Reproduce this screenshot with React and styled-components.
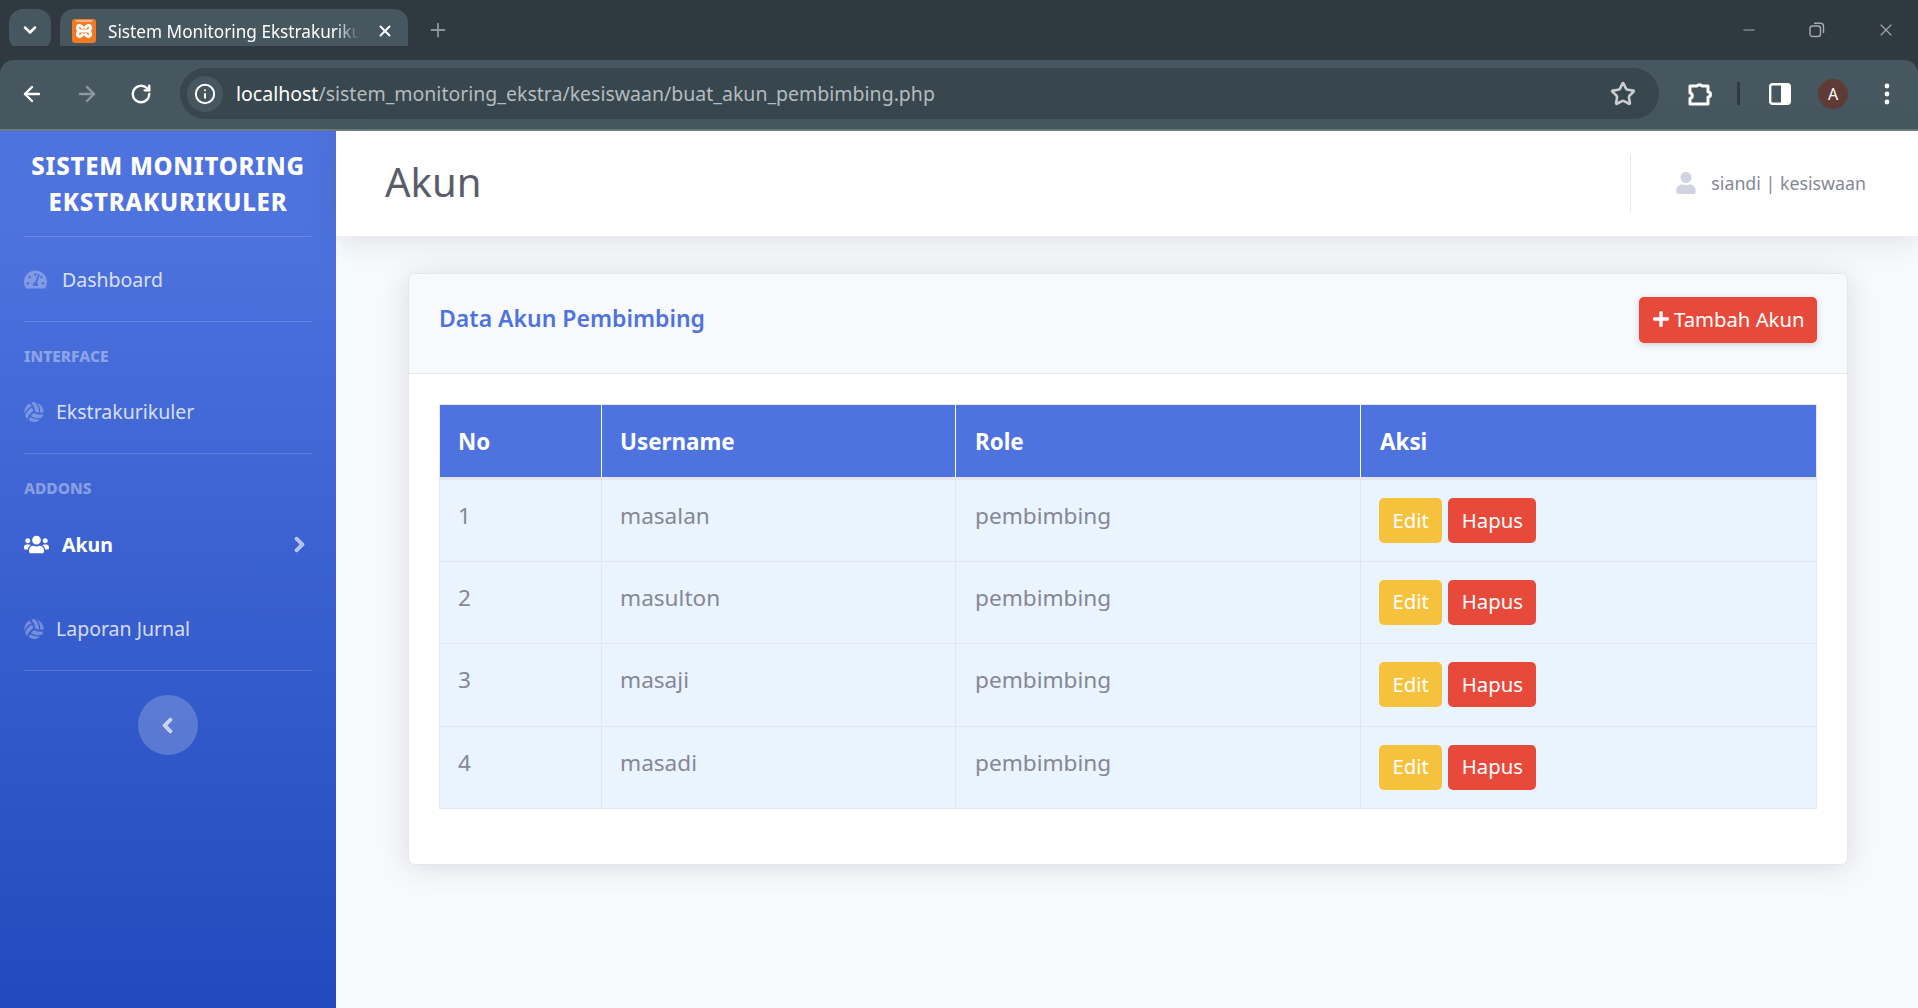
import React from 'react';
import styled, { createGlobalStyle } from 'styled-components';
import { ArrowLeft, ArrowRight, ChevronDown, Info, Minus, Plus, RotateCw, Star, X } from 'lucide-react';
import { FaChevronLeft, FaChevronRight, FaPlus, FaTachometerAlt, FaUser, FaUsers, FaVolleyballBall } from 'react-icons/fa';

const FONT = '"Noto Sans", "Open Sans", sans-serif';

const GlobalStyle = createGlobalStyle`
  html, body {
    margin: 0;
    padding: 0;
    height: 100%;
    overflow: hidden;
    background: #f8f9fc;
    font-family: ${FONT};
  }
  * { box-sizing: border-box; }
`;

const Window = styled.div`
  width: 1918px;
  height: 1008px;
  display: flex;
  flex-direction: column;
  overflow: hidden;
`;

/* browser chrome */
const TabStrip = styled.div`
  height: 60px;
  flex: none;
  display: flex;
  align-items: flex-end;
  background: #2f3a40;
  padding-left: 9px;
`;

const TabSearch = styled.div`
  width: 42px;
  height: 42px;
  margin-bottom: 9px;
  border-radius: 14px;
  background: #46575f;
  color: #fff;
  display: flex;
  align-items: center;
  justify-content: center;
`;

const Tab = styled.div`
  width: 348px;
  height: 51px;
  margin-left: 9px;
  padding: 0 14px 7px 12px;
  border-radius: 14px 14px 0 0;
  background: #46575f;
  display: flex;
  align-items: center;
  color: #fff;
`;

const TabTitle = styled.span`
  width: 252px;
  margin-left: 12px;
  font: 400 17.200px "Noto Sans", sans-serif;
  white-space: nowrap;
  overflow: hidden;
  -webkit-mask-image: linear-gradient(to right, #000 90%, transparent);
  mask-image: linear-gradient(to right, #000 90%, transparent);
`;

const TabClose = styled.span`
  margin-left: auto;
  display: flex;
`;

const NewTab = styled.div`
  margin: 0 0 5px 19px;
  height: 50px;
  display: flex;
  align-items: center;
  color: #8b9599;
`;

const WindowControls = styled.div`
  margin-left: auto;
  height: 60px;
  width: 206px;
  padding: 0 22px 0 28px;
  display: flex;
  align-items: center;
  justify-content: space-between;
  color: #a5acb0;
`;

const RestoreIcon = () => (
  <svg width="16" height="16" viewBox="0 0 16 16" fill="none" stroke="currentColor" strokeWidth="1.4">
    <rect x="1" y="4" width="10.5" height="10.5" rx="2.5" />
    <path d="M5 1.2h6.5a3 3 0 0 1 3 3V11" />
  </svg>
);

const Toolbar = styled.div`
  height: 71px;
  flex: none;
  display: flex;
  align-items: center;
  padding: 0 0 2px 20px;
  background: #46575f;
  border-bottom: 2px solid #6d7c84;
  border-radius: 14px 14px 0 0;
  box-shadow: 0 -14px 0 0 #2f3a40;
  color: #fff;
`;

const NavButton = styled.span`
  width: 55px;
  display: flex;
  color: ${(p) => (p.$off ? '#8d999f' : '#fff')};
`;

const Omnibox = styled.div`
  width: 1479px;
  height: 51px;
  margin-left: -5px;
  padding: 0 23px 0 7px;
  border-radius: 26px;
  background: #38464d;
  display: flex;
  align-items: center;
`;

const SiteInfo = styled.span`
  width: 36px;
  height: 36px;
  border-radius: 50%;
  background: #46575f;
  display: flex;
  align-items: center;
  justify-content: center;
  color: #fff;
`;

const Url = styled.span`
  margin-left: 13px;
  font: 400 19.500px "Noto Sans", sans-serif;
  color: #b3bcc0;
  b {
    font-weight: 400;
    color: #fff;
  }
`;

const BookmarkStar = styled.span`
  margin-left: auto;
  display: flex;
  color: #c9cdd0;
`;

const ToolbarEnd = styled.div`
  flex: 1;
  display: flex;
  align-items: center;
  padding: 0 28px;
`;

const ToolDivider = styled.span`
  width: 3px;
  height: 23px;
  margin: 0 29px 0 24px;
  background: #2f3a40;
`;

const Avatar = styled.span`
  width: 30px;
  height: 30px;
  margin-left: 27px;
  border-radius: 50%;
  background: #5e3b34;
  color: #fff;
  font: 400 16px "Noto Sans", sans-serif;
  display: flex;
  align-items: center;
  justify-content: center;
`;

const Kebab = styled.span`
  margin-left: auto;
  display: flex;
`;

const ExtensionIcon = () => (
  <svg width="26" height="26" viewBox="0 0 26 26" fill="none" stroke="#fff" strokeWidth="3" strokeLinejoin="round">
    <path d="M3 5h7a3 3 0 0 1 5 0h6v6a2.500 2.500 0 0 1 0 5v7H3v-5.500c3-.5 3-5 0-5.500z" />
  </svg>
);

const PanelIcon = () => (
  <svg width="22" height="22" viewBox="0 0 22 22">
    <rect x="1.200" y="1.200" width="19.600" height="19.600" rx="2.500" fill="none" stroke="#fff" strokeWidth="2.400" />
    <rect x="12" y="1.200" width="8.800" height="19.600" fill="#fff" />
  </svg>
);

const KebabIcon = () => (
  <svg width="6" height="22" viewBox="0 0 6 22" fill="#fff">
    <circle cx="3" cy="3" r="2.400" />
    <circle cx="3" cy="11" r="2.400" />
    <circle cx="3" cy="19" r="2.400" />
  </svg>
);

const XamppIcon = () => (
  <svg width="24" height="24" viewBox="0 0 24 24">
    <rect width="24" height="24" rx="3" fill="#f37a22" />
    <path d="M4 2h16" stroke="#fbd3b0" strokeWidth="1.300" />
    <path
      d="M10.500 8.500C9 5.800 5.500 6 5.500 9c0 2 1.500 2.700 3 3-1.500.3-3 1-3 3 0 3 3.500 3.200 5 .5M13.500 8.500c1.500-2.700 5-2.500 5 .5 0 2-1.500 2.700-3 3 1.500.3 3 1 3 3 0 3-3.500 3.200-5 .5M9 12h6"
      fill="none"
      stroke="#fff"
      strokeWidth="3"
      strokeLinecap="round"
    />
  </svg>
);

/* page */
const Page = styled.div`
  flex: 1;
  min-height: 0;
  display: flex;
`;

const Sidebar = styled.aside`
  width: 336px;
  flex: none;
  padding: 0 24px;
  background: linear-gradient(180deg, #4e73df 10%, #224abe 100%);
  display: flex;
  flex-direction: column;
`;

const Brand = styled.div`
  height: 106px;
  padding-top: 17px;
  flex: none;
  border-bottom: 1px solid rgba(255, 255, 255, 0.15);
  color: #fff;
  font-size: 24px;
  font-weight: 800;
  line-height: 36px;
  letter-spacing: 0.750px;
  text-align: center;
  white-space: nowrap;
`;

const NavItem = styled.div`
  height: ${(p) => p.$height}px;
  padding-top: ${(p) => p.$drop || 0}px;
  flex: none;
  display: flex;
  align-items: center;
  gap: ${(p) => p.$gap}px;
  font-size: 19.500px;
  font-weight: ${(p) => (p.$active ? 700 : 400)};
  color: ${(p) => (p.$active ? '#fff' : 'rgba(255, 255, 255, 0.8)')};
  border-bottom: ${(p) => (p.$rule ? '1px solid rgba(255, 255, 255, 0.15)' : 'none')};
  svg {
    flex: none;
    color: ${(p) => (p.$active ? '#fff' : 'rgba(255, 255, 255, 0.3)')};
  }
`;

const NavArrow = styled.span`
  margin-left: auto;
  margin-right: 4px;
  display: flex;
  svg {
    color: rgba(255, 255, 255, 0.55);
    stroke: currentColor;
    stroke-width: 36;
  }
`;

const SectionLabel = styled.div`
  height: ${(p) => p.$height}px;
  flex: none;
  display: flex;
  align-items: flex-end;
  font-size: 15.500px;
  font-weight: 800;
  line-height: 24px;
  color: rgba(255, 255, 255, 0.4);
`;

const SidebarToggle = styled.div`
  width: 60px;
  height: 60px;
  margin: 24px auto 0;
  flex: none;
  border-radius: 50%;
  background: rgba(255, 255, 255, 0.2);
  color: rgba(255, 255, 255, 0.6);
  display: flex;
  align-items: center;
  justify-content: center;
  svg {
    margin-left: -2px;
    stroke: currentColor;
    stroke-width: 36;
  }
`;

const Main = styled.main`
  flex: 1;
  min-width: 0;
  display: flex;
  flex-direction: column;
`;

const Topbar = styled.header`
  height: 105px;
  flex: none;
  padding: 0 52px 0 49px;
  background: #fff;
  box-shadow: 0 2px 28px rgba(58, 59, 69, 0.15);
  display: flex;
  align-items: center;
  position: relative;
`;

const PageTitle = styled.h1`
  margin: 0 0 4px;
  font-size: 40px;
  font-weight: 400;
  color: #5a5c69;
`;

const UserArea = styled.div`
  margin-left: auto;
  height: 57px;
  padding: 0 0 2px 44px;
  border-left: 1px solid #e3e6f0;
  display: flex;
  align-items: center;
  gap: 14px;
  font-size: 17.800px;
  color: #858796;
  svg {
    color: #d1d3e2;
  }
`;

const Content = styled.div`
  flex: 1;
  padding: 37px 70px 0 72px;
`;

const Card = styled.section`
  height: 592px;
  background: #fff;
  border: 1px solid #e3e6f0;
  border-radius: 7px;
  box-shadow: 0 2px 28px rgba(58, 59, 69, 0.15);
  overflow: hidden;
`;

const CardHeader = styled.div`
  height: 100px;
  padding: 0 30px 7px 30px;
  background: #f8f9fc;
  border-bottom: 1px solid #e3e6f0;
  display: flex;
  align-items: center;
  justify-content: space-between;
`;

const CardTitle = styled.h2`
  margin: 0 0 4px;
  font-size: 23px;
  font-weight: 600;
  color: #4e73df;
`;

const Button = styled.button`
  height: ${(p) => (p.$big ? 46 : 45)}px;
  padding: 0 ${(p) => (p.$big ? 12.5 : 13.5)}px 2px;
  border: 0;
  border-radius: 5px;
  background: ${(p) => p.$color};
  color: #fff;
  font-family: ${FONT};
  font-size: 20.300px;
  display: inline-flex;
  align-items: center;
  gap: 4px;
  box-shadow: ${(p) => (p.$big ? '0 2px 6px rgba(58, 59, 69, 0.2)' : 'none')};
`;

const CardBody = styled.div`
  padding: 30px 30px 0 30px;
`;

const Table = styled.table`
  width: 100%;
  table-layout: fixed;
  border-collapse: collapse;
  border: 1px solid #e3e6f0;
  font-size: 22.600px;
  color: #858796;

  col:nth-child(1) { width: 162px; }
  col:nth-child(2) { width: 354px; }
  col:nth-child(3) { width: 405px; }

  th {
    height: 74px;
    padding: 0 18px;
    background: #4e73df;
    border-right: 1px solid #fff;
    border-bottom: 3px solid #e3e6f0;
    color: #fff;
    font-size: 22.400px;
    font-weight: 700;
    text-align: left;
  }
  th:last-child { border-right: 0; }

  td {
    height: 82.500px;
    padding: 18px 18px 13px;
    background: #e9f4ff;
    border: 1px solid #e3e6f0;
    vertical-align: top;
    line-height: 36px;
  }

  th:nth-child(n + 3), td:nth-child(n + 3) { padding-left: 19px; }
`;

const Actions = styled.div`
  margin-left: -1px;
  display: flex;
  gap: 6px;
`;

const rows = [
  { no: 1, username: 'masalan' },
  { no: 2, username: 'masulton' },
  { no: 3, username: 'masaji' },
  { no: 4, username: 'masadi' },
];

const App = () => (
  <Window>
    <GlobalStyle />
    <TabStrip>
      <TabSearch><ChevronDown size={20} strokeWidth={3} /></TabSearch>
      <Tab>
        <XamppIcon />
        <TabTitle>Sistem Monitoring Ekstrakurikuler</TabTitle>
        <TabClose><X size={18} strokeWidth={2.5} /></TabClose>
      </Tab>
      <NewTab><Plus size={22} /></NewTab>
      <WindowControls>
        <Minus size={18} strokeWidth={1.3} />
        <RestoreIcon />
        <X size={20} strokeWidth={1.3} />
      </WindowControls>
    </TabStrip>
    <Toolbar>
      <NavButton><ArrowLeft size={24} strokeWidth={2.4} /></NavButton>
      <NavButton $off><ArrowRight size={24} strokeWidth={2.4} /></NavButton>
      <NavButton><RotateCw size={22} strokeWidth={2.6} /></NavButton>
      <Omnibox>
        <SiteInfo><Info size={22} strokeWidth={2.2} /></SiteInfo>
        <Url><b>localhost</b>/sistem_monitoring_ekstra/kesiswaan/buat_akun_pembimbing.php</Url>
        <BookmarkStar><Star size={26} strokeWidth={2.4} /></BookmarkStar>
      </Omnibox>
      <ToolbarEnd>
        <ExtensionIcon />
        <ToolDivider />
        <PanelIcon />
        <Avatar>A</Avatar>
        <Kebab><KebabIcon /></Kebab>
      </ToolbarEnd>
    </Toolbar>
    <Page>
      <Sidebar>
        <Brand>SISTEM MONITORING<br />EKSTRAKURIKULER</Brand>
        <NavItem $height={85} $gap={15} $rule><FaTachometerAlt size={23} />Dashboard</NavItem>
        <SectionLabel $height={46}>INTERFACE</SectionLabel>
        <NavItem $height={86} $drop={2} $gap={12} $rule><FaVolleyballBall size={20} />Ekstrakurikuler</NavItem>
        <SectionLabel $height={46}>ADDONS</SectionLabel>
        <NavItem $height={87} $drop={2} $gap={13} $active>
          <FaUsers size={25} />Akun
          <NavArrow><FaChevronRight size={17} /></NavArrow>
        </NavItem>
        <NavItem $height={84} $gap={12} $rule><FaVolleyballBall size={20} />Laporan Jurnal</NavItem>
        <SidebarToggle><FaChevronLeft size={17} /></SidebarToggle>
      </Sidebar>
      <Main>
        <Topbar>
          <PageTitle>Akun</PageTitle>
          <UserArea><FaUser size={22} />siandi | kesiswaan</UserArea>
        </Topbar>
        <Content>
          <Card>
            <CardHeader>
              <CardTitle>Data Akun Pembimbing</CardTitle>
              <Button $big $color="#e74a3b"><FaPlus size={18} />Tambah Akun</Button>
            </CardHeader>
            <CardBody>
              <Table>
                <colgroup><col /><col /><col /><col /></colgroup>
                <thead>
                  <tr><th>No</th><th>Username</th><th>Role</th><th>Aksi</th></tr>
                </thead>
                <tbody>
                  {rows.map((row) => (
                    <tr key={row.no}>
                      <td>{row.no}</td>
                      <td>{row.username}</td>
                      <td>pembimbing</td>
                      <td>
                        <Actions>
                          <Button $color="#f6c23e">Edit</Button>
                          <Button $color="#e74a3b">Hapus</Button>
                        </Actions>
                      </td>
                    </tr>
                  ))}
                </tbody>
              </Table>
            </CardBody>
          </Card>
        </Content>
      </Main>
    </Page>
  </Window>
);

export default App;
